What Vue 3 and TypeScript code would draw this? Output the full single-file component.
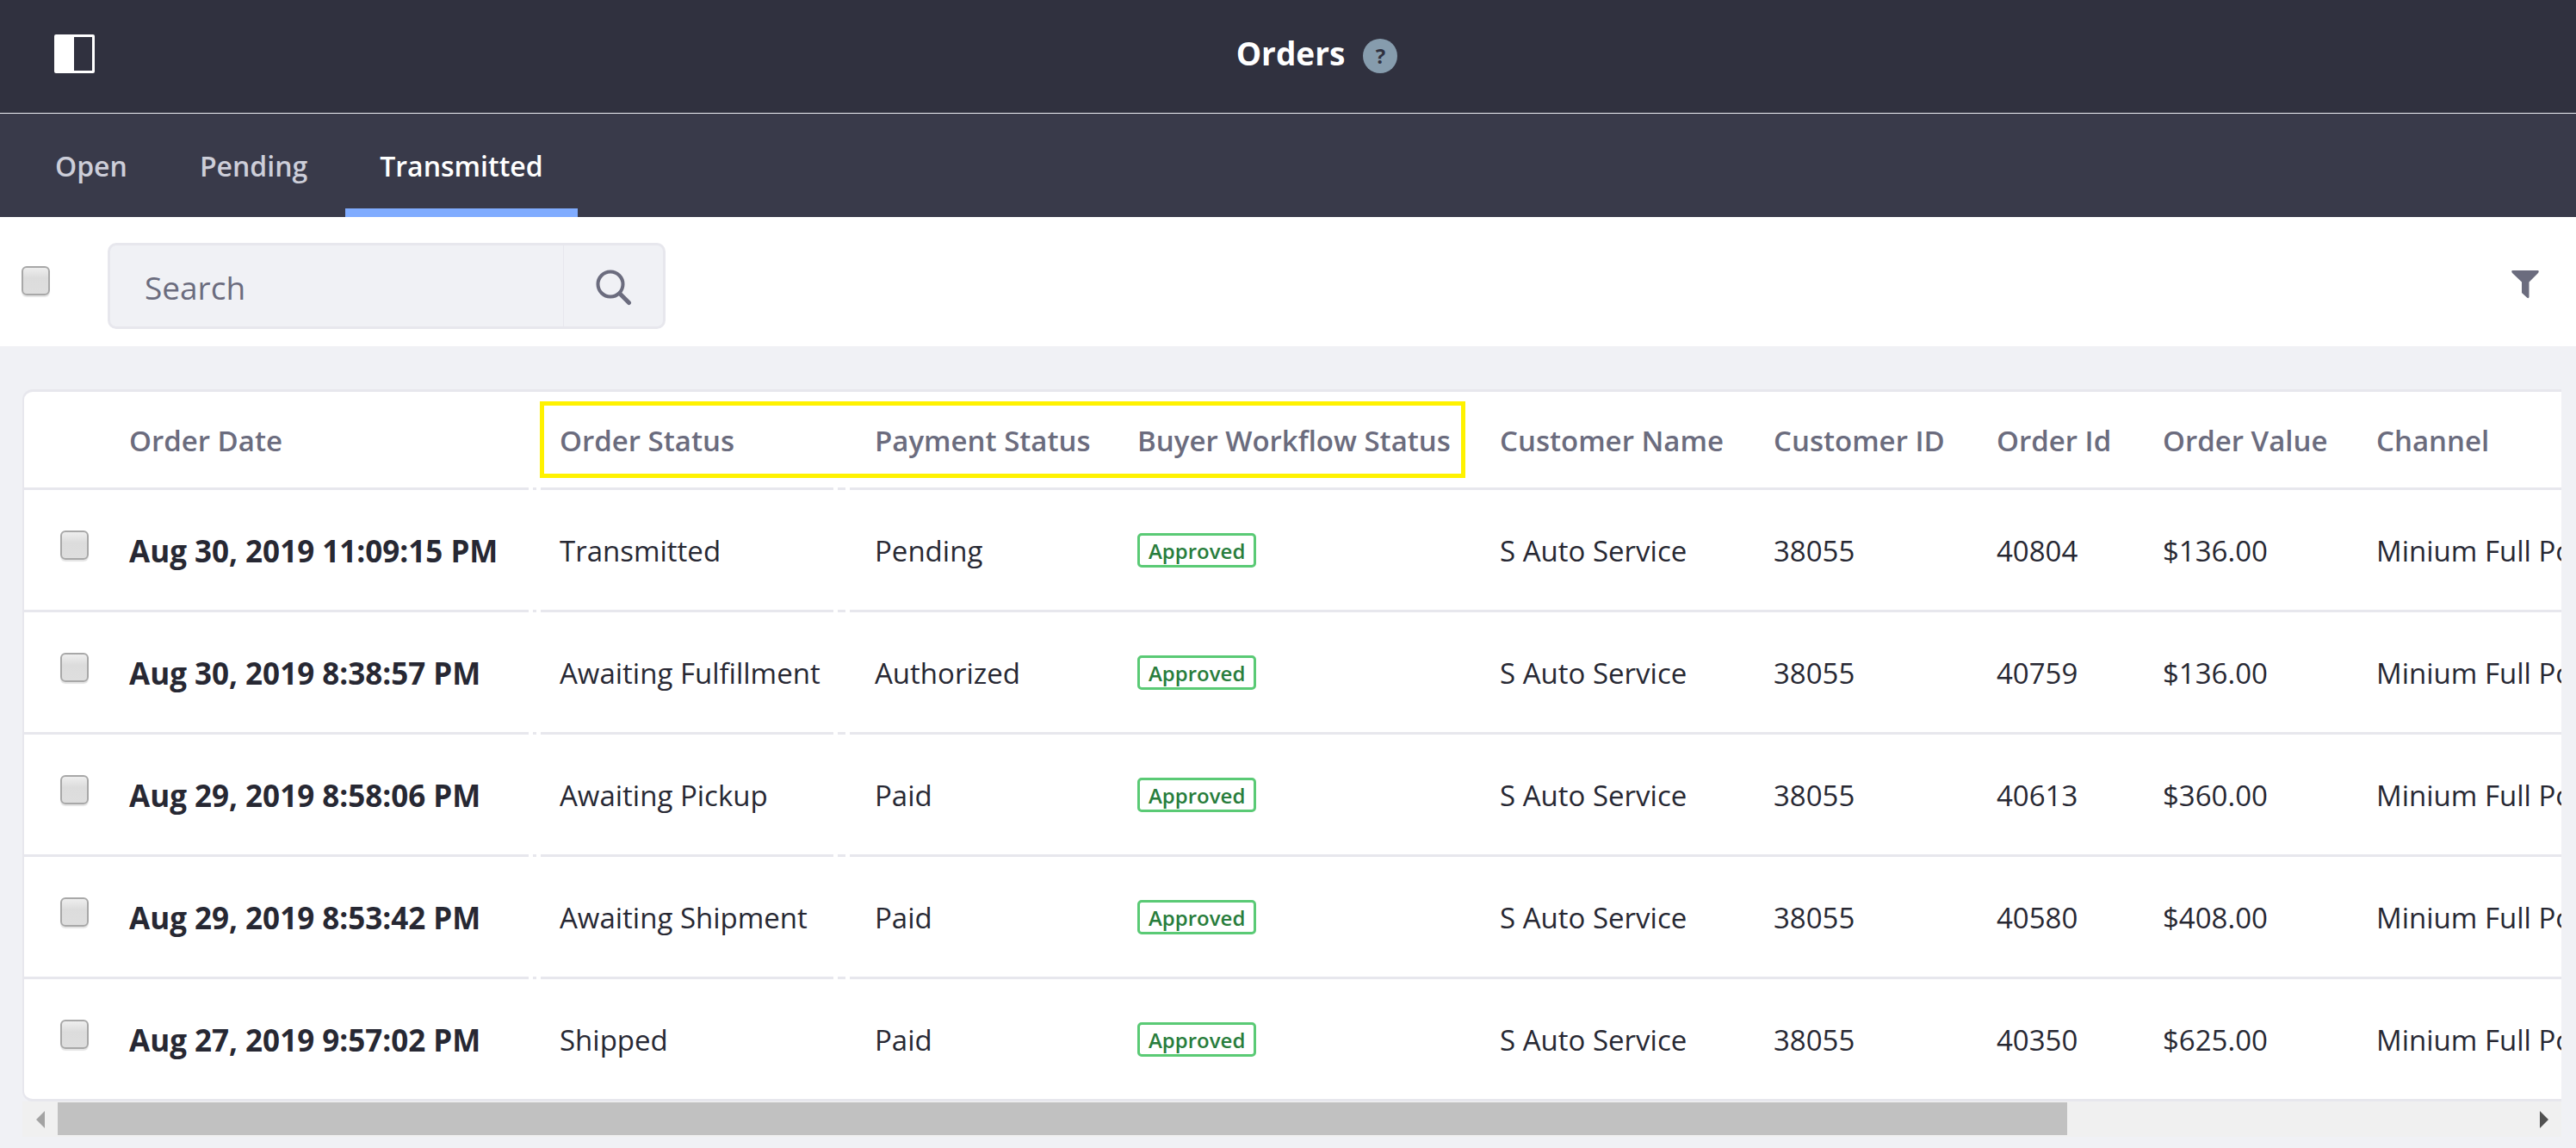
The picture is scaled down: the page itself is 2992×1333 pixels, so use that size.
<script setup lang="ts">
import { ref } from 'vue'

interface Order {
  date: string
  status: string
  payment: string
  workflow: string
  customer: string
  customerId: string
  id: string
  value: string
  channel: string
}

const tabs = ['Open', 'Pending', 'Transmitted']
const activeTab = ref('Transmitted')
const query = ref('')

const order = (date: string, status: string, payment: string, id: string, value: string): Order => ({
  date, status, payment, id, value,
  workflow: 'Approved',
  customer: 'S Auto Service',
  customerId: '38055',
  channel: 'Minium Full Portal',
})

const orders: Order[] = [
  order('Aug 30, 2019 11:09:15 PM', 'Transmitted', 'Pending', '40804', '$136.00'),
  order('Aug 30, 2019 8:38:57 PM', 'Awaiting Fulfillment', 'Authorized', '40759', '$136.00'),
  order('Aug 29, 2019 8:58:06 PM', 'Awaiting Pickup', 'Paid', '40613', '$360.00'),
  order('Aug 29, 2019 8:53:42 PM', 'Awaiting Shipment', 'Paid', '40580', '$408.00'),
  order('Aug 27, 2019 9:57:02 PM', 'Shipped', 'Paid', '40350', '$625.00'),
]
</script>

<template>
  <div class="page">
    <header class="topbar">
      <button class="icon-button" type="button" aria-label="Toggle menu">
        <svg width="47" height="45" viewBox="0 0 47 45">
          <rect width="47" height="45" rx="2" fill="#fff" />
          <rect x="23" y="3" width="21" height="39" fill="#30313f" />
        </svg>
      </button>
      <div class="title">
        <h1>Orders</h1>
        <button class="help" type="button" aria-label="Help">?</button>
      </div>
    </header>

    <nav class="tabs">
      <a v-for="tab in tabs" :key="tab" href="#" :class="{ active: tab === activeTab }" @click.prevent="activeTab = tab">{{ tab }}</a>
    </nav>

    <div class="toolbar">
      <input class="check" type="checkbox" aria-label="Select all orders" />
      <form class="search" @submit.prevent>
        <input v-model="query" type="text" placeholder="Search" aria-label="Search" />
        <button type="submit" aria-label="Submit search">
          <svg width="42" height="42" viewBox="0 0 42 42" fill="none" stroke="#6b6c7e" stroke-linecap="round">
            <circle cx="17" cy="17" r="14.5" stroke-width="4" />
            <path d="M28 28L38.500 38.500" stroke-width="5" />
          </svg>
        </button>
      </form>
      <button class="icon-button filter" type="button" aria-label="Filter">
        <svg width="32" height="33" viewBox="0 0 32 33">
          <path d="M1 0H31Q32.500 1 31 3L20.500 13.500V31Q20 33 18 31.500L12 26V13.500L1 3Q-.5 1 1 0Z" fill="#6b6c7e" />
        </svg>
      </button>
    </div>

    <main>
      <div class="card">
        <table>
          <colgroup>
            <col class="c-check" /><col class="c-date" /><col class="c-status" /><col class="c-payment" />
            <col class="c-workflow" /><col class="c-customer" /><col class="c-customer-id" />
            <col class="c-id" /><col class="c-value" /><col />
          </colgroup>
          <thead>
            <tr>
              <th></th>
              <th>Order Date</th>
              <th class="notch">Order Status<span class="highlight"></span></th>
              <th class="notch wide">Payment Status</th>
              <th>Buyer Workflow Status</th>
              <th>Customer Name</th>
              <th>Customer ID</th>
              <th>Order Id</th>
              <th>Order Value</th>
              <th>Channel</th>
            </tr>
          </thead>
          <tbody>
            <tr v-for="o in orders" :key="o.id">
              <td class="select"><input class="check" type="checkbox" :aria-label="`Select order ${o.id}`" /></td>
              <td class="date">{{ o.date }}</td>
              <td class="notch">{{ o.status }}</td>
              <td class="notch wide">{{ o.payment }}</td>
              <td><span class="badge">{{ o.workflow }}</span></td>
              <td>{{ o.customer }}</td>
              <td>{{ o.customerId }}</td>
              <td>{{ o.id }}</td>
              <td>{{ o.value }}</td>
              <td>{{ o.channel }}</td>
            </tr>
          </tbody>
        </table>
      </div>
      <div class="scrollbar">
        <button type="button" aria-label="Scroll left">
          <svg width="10" height="20" viewBox="0 0 10 20"><path d="M10 0V20L0 10Z" fill="#a3a3a3" /></svg>
        </button>
        <div class="track"><div class="thumb"></div></div>
        <button type="button" aria-label="Scroll right">
          <svg width="10" height="20" viewBox="0 0 10 20"><path d="M0 0V20L10 10Z" fill="#505050" /></svg>
        </button>
      </div>
    </main>
  </div>
</template>

<style>
body {
  margin: 0;
  background: #f0f1f5;
}
</style>

<style scoped>
.page {
  min-height: 100vh;
  background: #f0f1f5;
  color: #272833;
  font: 33px/48px "Segoe UI", "Open Sans", "Noto Sans", sans-serif;
}
.page *,
.page *::after {
  box-sizing: border-box;
}
button,
input {
  margin: 0;
  padding: 0;
  border: 0;
  background: none;
  font: inherit;
  color: inherit;
}
svg {
  display: block;
}
.topbar {
  display: grid;
  grid-template-columns: 1fr auto 1fr;
  align-items: center;
  height: 132px;
  padding: 0 63px 6px;
  background: #30313f;
  border-bottom: 1px solid #f0f1f5;
}
.icon-button {
  justify-self: start;
}
.title {
  display: flex;
  align-items: center;
  gap: 21px;
  margin-left: 67px;
}
h1 {
  margin: 0 0 2px;
  font-size: 37px;
  line-height: 48px;
  font-weight: 700;
  color: #fff;
}
.help {
  width: 40px;
  height: 40px;
  margin-top: 4px;
  border-radius: 50%;
  background: #869cad;
  color: #30313f;
  font-size: 24px;
  line-height: 40px;
  font-weight: 700;
}
.tabs {
  display: flex;
  gap: 4px;
  height: 120px;
  padding-left: 24px;
  background: #393a4a;
}
.tabs a {
  padding: 37px 40px 0;
  border-bottom: 10px solid transparent;
  color: #cdced9;
  font-size: 32px;
  font-weight: 600;
  text-decoration: none;
}
.tabs a.active {
  border-color: #80acff;
  color: #fff;
}
.toolbar {
  display: flex;
  align-items: center;
  height: 150px;
  padding: 0 43px 0 25px;
  background: #fff;
}
.check {
  appearance: none;
  display: block;
  flex: none;
  width: 33px;
  height: 34px;
  border: 2px solid #a8a8a8;
  border-radius: 6px;
  background: linear-gradient(#eee, #dcdcdc 40%, #dedede);
  box-shadow: 0 2px 1px #e4e4e4;
}
.toolbar .check {
  margin-bottom: 2px;
}
.search {
  display: flex;
  width: 648px;
  height: 100px;
  margin: 10px auto 0 67px;
  border: 3px solid #e7e7ed;
  border-radius: 10px;
  background: #f0f1f5;
}
.search input {
  flex: 1;
  min-width: 0;
  padding: 3px 0 0 40px;
  font-size: 37px;
  color: #6b6c7e;
}
.search input::placeholder {
  color: #6b6c7e;
  opacity: 1;
}
.search button {
  display: grid;
  place-items: center;
  width: 116px;
  padding-top: 4px;
  border-left: 1px solid #e7e7ed;
}
.filter {
  margin-top: 6px;
}
main {
  padding: 50px 17px 13px 26px;
}
.card {
  overflow: hidden;
  border: solid #e7e7ed;
  border-width: 3px 0 3px 2px;
  border-radius: 12px 0 0 12px;
  background: #fff;
}
table {
  width: 3624px;
  table-layout: fixed;
  border-collapse: separate;
  border-spacing: 0;
}
.c-check { width: 90px; }
.c-date { width: 500px; }
.c-status { width: 366px; }
.c-payment { width: 305px; }
.c-workflow { width: 421px; }
.c-customer { width: 318px; }
.c-customer-id { width: 259px; }
.c-id { width: 193px; }
.c-value { width: 248px; }
th,
td {
  position: relative;
  height: 142px;
  padding: 2px 0 0 32px;
  border-bottom: 3px solid #e7e7ed;
  text-align: left;
  white-space: nowrap;
}
th {
  height: 114px;
  color: #6b6c7e;
  font-weight: 600;
}
tbody tr:last-child td {
  height: 139px;
  border-bottom: 0;
}
td.select {
  padding: 0 0 12px 42px;
}
.date {
  font-size: 35px;
  font-weight: 700;
}
.notch::after {
  content: "";
  position: absolute;
  left: -4px;
  bottom: -3px;
  width: 14px;
  height: 3px;
  border: solid #fff;
  border-width: 0 5px;
  background: #e7e7ed;
}
.notch.wide::after {
  width: 19px;
  left: -16px;
}
tbody tr:last-child .notch::after {
  display: none;
}
.highlight {
  position: absolute;
  z-index: 1;
  top: 11px;
  left: 9px;
  width: 1075px;
  height: 89px;
  border: 5px solid #fff200;
}
.badge {
  display: inline-block;
  margin-bottom: 6px;
  padding: 2px 10px 0;
  border: 3px solid #5aca75;
  border-radius: 5px;
  color: #287d3c;
  font-size: 24px;
  line-height: 32px;
  font-weight: 600;
  vertical-align: middle;
}
.scrollbar {
  display: flex;
  height: 41px;
  background: #f0f0f0;
}
.scrollbar button {
  display: grid;
  place-items: center;
  width: 41px;
}
.track {
  flex: 1;
  padding: 1px 0 2px;
}
.thumb {
  width: 81.4%;
  height: 38px;
  background: #c1c1c1;
}
</style>
